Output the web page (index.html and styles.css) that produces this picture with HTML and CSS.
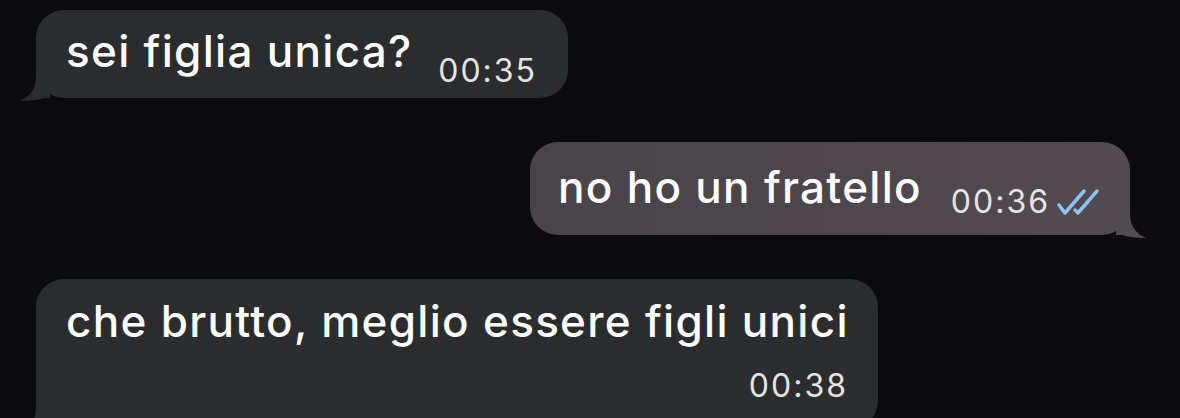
FILE: index.html
```html
<!DOCTYPE html>
<html lang="it">
<head>
<meta charset="utf-8">
<title>Chat</title>
<link rel="stylesheet" href="styles.css">
</head>
<body>
<main class="chat">
  <div class="row row-in">
    <div class="bubble bubble-in b1">
      <span class="text">sei figlia unica?</span>
      <span class="meta"><span class="time">00:35</span></span>
      <svg class="tail tail-left" viewBox="0 0 30 32" aria-hidden="true"><path d="M16 0 H30 V29 H24 C18 31 10 32 0 32 C9 28 16 21 16 8 Z"/></svg>
    </div>
  </div>
  <div class="row row-out">
    <div class="bubble bubble-out b2">
      <span class="text">no ho un fratello</span>
      <span class="meta">
        <span class="time">00:36</span>
        <svg class="checks" viewBox="0 0 44 28" aria-hidden="true">
          <path d="M3 17 L9 25 L28 3"/>
          <path d="M19 22 L22 25 L41 3"/>
        </svg>
      </span>
      <svg class="tail tail-right" viewBox="0 0 30 32" aria-hidden="true"><path d="M14 0 H0 V29 H6 C12 31 20 32 30 32 C21 28 14 21 14 8 Z"/></svg>
    </div>
  </div>
  <div class="row row-in">
    <div class="bubble bubble-in b3">
      <span class="text">che brutto, meglio essere figli unici</span>
      <span class="meta"><span class="time">00:38</span></span>
      <svg class="tail tail-left" viewBox="0 0 30 32" aria-hidden="true"><path d="M16 0 H30 V29 H24 C18 31 10 32 0 32 C9 28 16 21 16 8 Z"/></svg>
    </div>
  </div>
</main>
</body>
</html>
```

FILE: styles.css
```css
html, body {
  margin: 0;
  padding: 0;
  background: #0b0b0d;
  overflow: hidden;
}

.chat {
  width: 1180px;
  height: 418px;
  padding-top: 10px;
  box-sizing: border-box;
  display: flex;
  flex-direction: column;
  gap: 44px;
  overflow: hidden;
  font-family: Inter, "Liberation Sans", Arial, sans-serif;
  color: #ffffff;
}

.row {
  display: flex;
  flex-shrink: 0;
}

.row-in {
  padding-left: 36px;
}

.row-out {
  justify-content: flex-end;
  padding-right: 50px;
}

.bubble {
  position: relative;
  display: flex;
  border-radius: 28px;
  box-sizing: border-box;
}

.bubble-in {
  background: #2b2c2e;
}

.bubble-in .tail path {
  fill: #2b2c2e;
}

.bubble-out {
  background: linear-gradient(90deg, #49444a 0%, #514a4f 100%);
}

.bubble-out .tail path {
  fill: #514a4f;
}

.text {
  font-size: 44px;
  line-height: 50px;
  letter-spacing: 1.3px;
  font-weight: 500;
  white-space: nowrap;
}

.meta {
  display: flex;
  align-items: center;
  gap: 6px;
}

.time {
  font-size: 32px;
  line-height: 36px;
  letter-spacing: 2px;
  color: #e4e4e4;
}

.b1,
.b2 {
  align-items: flex-start;
  justify-content: space-between;
}

.b1 .meta,
.b2 .meta {
  align-self: flex-end;
}

.b1 {
  width: 532px;
  height: 88px;
  padding: 16px 31px 9px 30px;
}

.b2 {
  width: 600px;
  height: 93px;
  padding: 20px 30px 15px 28px;
}

.b2 .time {
  color: #e8e3e7;
}

.b3 {
  width: 842px;
  height: 150px;
  padding: 17px 28px 16px 30px;
  flex-direction: column;
  gap: 22px;
}

.b3 .text {
  letter-spacing: 1.3px;
}

.b3 .meta {
  justify-content: flex-end;
  padding-right: 2px;
}

.checks {
  width: 44px;
  height: 28px;
  fill: none;
  stroke: #8fc3f2;
  stroke-width: 3.5;
  stroke-linecap: round;
  stroke-linejoin: round;
}

.tail {
  position: absolute;
  bottom: -3px;
  width: 30px;
  height: 32px;
}

.tail-left {
  left: -16px;
}

.tail-right {
  right: -16px;
}
```
